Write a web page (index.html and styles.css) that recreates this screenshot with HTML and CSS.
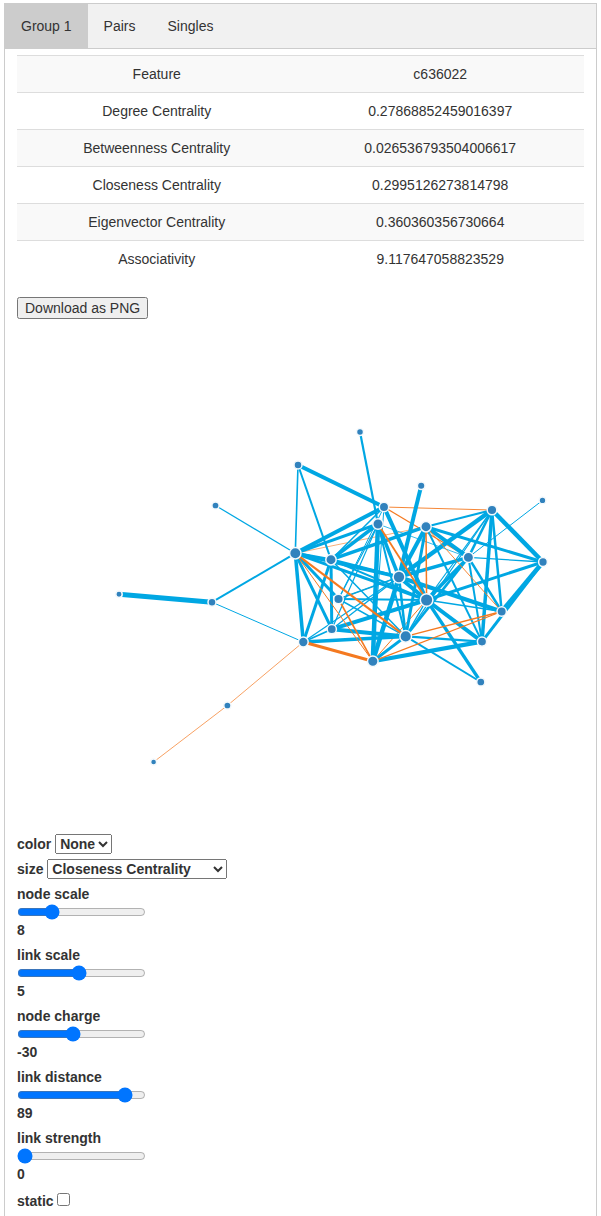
FILE: index.html
```html
<!DOCTYPE html>
<html lang="en">
<head>
<meta charset="utf-8">
<meta name="viewport" content="width=device-width, initial-scale=1">
<title>Network groups</title>
<link rel="stylesheet" href="styles.css">
</head>
<body>
<main class="panel">
  <nav class="tabs">
    <button type="button" class="tab active">Group 1</button>
    <button type="button" class="tab">Pairs</button>
    <button type="button" class="tab">Singles</button>
  </nav>
  <section class="content">
    <table class="stats">
      <tbody>
        <tr><td>Feature</td><td>c636022</td></tr>
        <tr><td>Degree Centrality</td><td>0.27868852459016397</td></tr>
        <tr><td>Betweenness Centrality</td><td>0.026536793504006617</td></tr>
        <tr><td>Closeness Centrality</td><td>0.2995126273814798</td></tr>
        <tr><td>Eigenvector Centrality</td><td>0.360360356730664</td></tr>
        <tr><td>Associativity</td><td>9.117647058823529</td></tr>
      </tbody>
    </table>
    <button type="button" class="download">Download as PNG</button>
    <svg class="graph" id="graph" viewBox="17 334 567 500" role="img" aria-label="Network graph"></svg>
    <form class="controls">
      <div class="row"><label for="color">color</label> <select id="color"><option>None</option></select></div>
      <div class="row"><label for="size">size</label>
        <select id="size">
          <option>Degree Centrality</option>
          <option>Betweenness Centrality</option>
          <option selected>Closeness Centrality</option>
          <option>Eigenvector Centrality</option>
        </select>
      </div>
      <div class="row"><label for="node-scale">node scale</label><input class="slider" type="range" id="node-scale" min="1" max="30" value="8"><output for="node-scale">8</output></div>
      <div class="row"><label for="link-scale">link scale</label><input class="slider" type="range" id="link-scale" min="0" max="10.5" step="0.5" value="5"><output for="link-scale">5</output></div>
      <div class="row"><label for="node-charge">node charge</label><input class="slider" type="range" id="node-charge" min="-200" max="200" value="-30"><output for="node-charge">-30</output></div>
      <div class="row"><label for="link-distance">link distance</label><input class="slider" type="range" id="link-distance" min="1" max="100" value="89"><output for="link-distance">89</output></div>
      <div class="row"><label for="link-strength">link strength</label><input class="slider" type="range" id="link-strength" min="0" max="1" step="0.1" value="0"><output for="link-strength">0</output></div>
      <div class="row"><label for="static">static</label> <input class="check" type="checkbox" id="static"></div>
    </form>
  </section>
</main>
<script src="graph.js"></script>
</body>
</html>
```

FILE: styles.css
```css
* { box-sizing: border-box; }

body {
  margin: 0;
  padding: 3px 4px 0;
  font: 14px/20px "Liberation Sans", Arial, sans-serif;
  color: #333;
  background: #fff;
}

.panel {
  display: flex;
  flex-direction: column;
  min-height: calc(100vh - 3px);
}

.tabs {
  display: flex;
  border: 1px solid #ccc;
  background: #f1f1f1;
}

.tab {
  padding: 12px 16px;
  border: 0;
  background: transparent;
  color: inherit;
  font: inherit;
}

.tab.active { background: #ccc; }

.content {
  flex: 1;
  padding: 6px 12px 0;
  border: 1px solid #ccc;
  border-width: 0 1px;
}

.stats {
  width: 100%;
  margin-bottom: 20px;
  border-collapse: collapse;
  border-spacing: 0;
  text-align: center;
}

.stats td {
  padding: 8px;
  border-top: 1px solid #ddd;
}

.stats tr:nth-child(odd) { background: #f9f9f9; }

.download {
  display: block;
  padding: 1px 6px;
  font: 14px "Liberation Sans", Arial, sans-serif;
  color: inherit;
}

.graph {
  display: block;
  width: 100%;
  margin-top: 15px;
}

.link { stroke: #00a7e3; }
.link.negative { stroke: #f47920; }
.node { fill: #3182bd; stroke: #f4f9fc; stroke-width: 1.5; }

.controls { font-weight: 700; }

.row { margin-bottom: 5px; }

.row label { display: inline-block; }

.row select {
  height: 20px;
  font: inherit;
  color: inherit;
  vertical-align: top;
}

.slider {
  display: block;
  width: 129px;
  height: 16px;
  margin: 0;
}

.row output { display: block; }

.check { margin: 4px 0 0; }
```

FILE: graph.js
```js
// Node id: [x, y, radius]
const nodes = {
  A: [360, 432, 3], B: [298, 465, 3.5], C: [215.5, 505.5, 3.1], D: [384, 507, 4.2],
  E: [378, 524, 4.7], F: [421.2, 485.7, 3.3], G: [426, 526.7, 4.7], H: [492, 510, 4.3],
  I: [542.5, 500.4, 2.9], J: [468.4, 557.4, 4.7], K: [543, 562, 3.9], L: [295.3, 553.3, 5.2],
  M: [331, 559.7, 4.7], N: [399, 577, 5.4], O: [426.6, 600, 5.8], P: [338.5, 599, 4.3],
  Q: [331.8, 629.2, 4.1], R: [303.3, 642, 4.4], S: [372.8, 661.3, 4.8], T: [405.7, 636.4, 5.3],
  U: [482, 641.6, 4.1], V: [501.7, 611.5, 4.2], W: [480.8, 682, 3.6], X: [212, 602.2, 3.5],
  Y: [119, 594.2, 2.7], Z: [227.4, 705.5, 3.1], a: [153.6, 762, 2.5]
};

// "source target width", grouped by the sign of the association
const weakNegative = "D J 1.2,P N 1,O S 1,L G .6,D H .9";
const positive = `
A E 2.2,B D 4,B L 1.6,B M 2,C L 1.2,Y X 5,X L 2,X R 1,D L 4,D M 1.5,D P 1,D O 4,D S 1,
E L 3,E M 3.5,E S 4.5,E P 1.2,E Q 1.2,E N 3.5,E T 2,E J .8,F N 4,G M 3.5,G N 4,G T 3,G H 2,
G K 3,G J 4,G U 2,H N 4.5,H O 1.2,H J 2.5,H K 4.5,H U 3.5,H V 2.5,H T 1.2,I J 1,J N 3.5,J O 3.5,
J K 1.3,J V 2.5,J U 2,J T 2.5,K O 3,K V 4.5,K U 3,L M 3,L N 3.5,L O 3,L P 3,L Q 3,L R 3.5,
M N 3,M O 2,M R 3,M Q 3,M T 1.5,N S 4.5,N T 2.5,N O 4,N V 4,N P 1.5,N Q 1.3,O P 2.2,O Q 4,
O T 1.5,O W 3.2,O U 4,O V 1.5,P T 1.5,Q T 4,Q R 1.8,N R 1.2,R T 3.5,S T 3,S U 4.2,T U 2.4,T W 2`;
const negative = `
E O 1.8,G O 1.5,G V .9,L T 2.1,L S 1,P S 1.6,R S 3,R Z .7,Z a .7,S V 1.3,T V 1.3`;

const svg = document.getElementById("graph");

function add(tag, attributes) {
  const element = document.createElementNS("http://www.w3.org/2000/svg", tag);
  for (const name in attributes) element.setAttribute(name, attributes[name]);
  svg.appendChild(element);
}

function addLinks(list, className) {
  for (const item of list.split(",")) {
    const [source, target, width] = item.trim().split(" ");
    const [x1, y1] = nodes[source];
    const [x2, y2] = nodes[target];
    add("line", { class: className, x1, y1, x2, y2, "stroke-width": width });
  }
}

addLinks(weakNegative, "link negative");
addLinks(positive, "link");
addLinks(negative, "link negative");
for (const [cx, cy, r] of Object.values(nodes)) add("circle", { class: "node", cx, cy, r: r + 0.5 });
```
